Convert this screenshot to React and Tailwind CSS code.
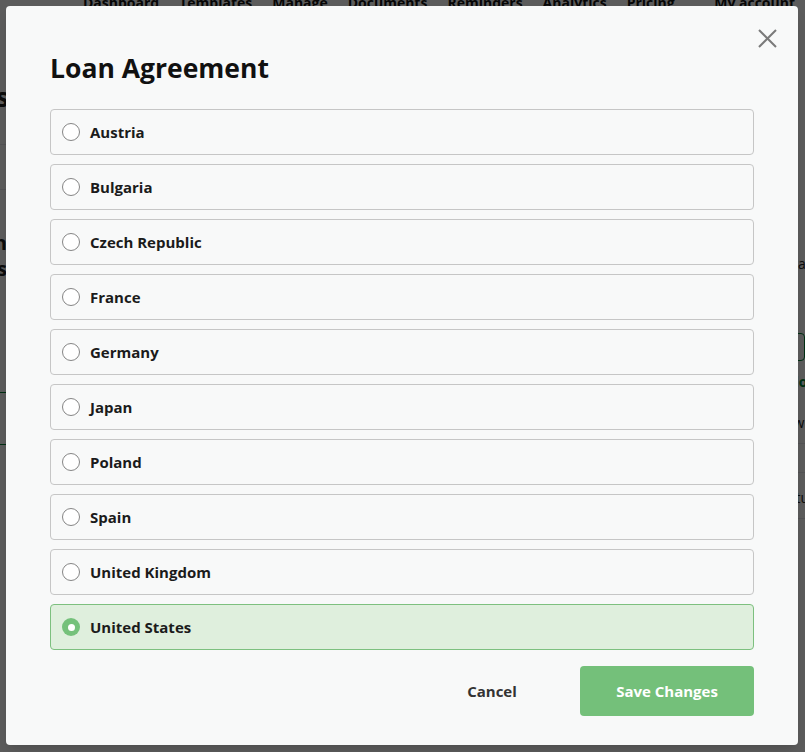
import React, { useState } from "react";

const countries = [
  "Austria",
  "Bulgaria",
  "Czech Republic",
  "France",
  "Germany",
  "Japan",
  "Poland",
  "Spain",
  "United Kingdom",
  "United States",
];

const navItems = [
  { label: "Dashboard", x: "ml-[83px]" },
  { label: "Templates", x: "ml-[20px]" },
  { label: "Manage", x: "ml-[20px]" },
  { label: "Documents", x: "ml-[20px]" },
  { label: "Reminders", x: "ml-[20px]" },
  { label: "Analytics", x: "ml-[20px]" },
  { label: "Pricing", x: "ml-[20px]" },
];

const LoanModal = () => {
  const [selected, setSelected] = useState("United States");

  return (
    <div className="w-[792px] h-[739px] bg-[#f8f9f9] rounded-[4px] relative px-[44px] pt-[46px] shadow-lg">
      {/* Close */}
      <button className="absolute top-[22px] right-[20px] w-[21px] h-[21px] flex items-center justify-center">
        <svg width="21" height="21" viewBox="0 0 21 21">
          <path d="M2 2 L19 19 M19 2 L2 19" stroke="#7a7a7a" strokeWidth="2" fill="none" />
        </svg>
      </button>

      <h2 className="text-[26.5px] leading-[32px] font-bold text-[#111] mb-[25px]">
        Loan Agreement
      </h2>

      <div className="flex flex-col gap-[9px]">
        {countries.map((c) => {
          const active = c === selected;
          return (
            <label
              key={c}
              onClick={() => setSelected(c)}
              className={`h-[46px] flex items-center gap-[10px] px-[11px] rounded-[4px] border cursor-pointer ${
                active ? "bg-[#dfefdd] border-[#7dc07f]" : "bg-[#f8f9f9] border-[#c6c6c6]"
              }`}
            >
              {active ? (
                <span className="w-[18px] h-[18px] rounded-full bg-[#75c17b] flex items-center justify-center">
                  <span className="w-[7px] h-[7px] rounded-full bg-white" />
                </span>
              ) : (
                <span className="w-[18px] h-[18px] rounded-full border border-[#858585] bg-white" />
              )}
              <span className="text-[15px] font-bold text-[#1b1b1b]">{c}</span>
            </label>
          );
        })}
      </div>

      <div className="flex justify-end items-center mt-[16px]">
        <button className="w-[100px] h-[50px] text-[15px] font-bold text-[#333] mr-[38px]">
          Cancel
        </button>
        <button className="w-[174px] h-[50px] rounded-[4px] bg-[#74c07a] text-white text-[15px] font-bold">
          Save Changes
        </button>
      </div>
    </div>
  );
};

export default function App() {
  return (
    <div className="relative w-full h-screen overflow-hidden bg-white font-['Open_Sans',sans-serif]">
      {/* Background page */}
      <div className="flex items-start -mt-[8px] h-[56px] text-[14px] font-bold text-[#111] whitespace-nowrap">
        {navItems.map((n) => (
          <span key={n.label} className={n.x}>
            {n.label}
          </span>
        ))}
        <span className="ml-auto mr-[10px]">My account</span>
      </div>
      <div className="flex">
        <div className="w-[300px] font-bold text-[#222] pt-[30px]">
          <div className="w-[9px] h-[66px] flex justify-end whitespace-nowrap text-[26px]">Documents</div>
          <div className="border-t border-gray-200 h-[45px]" />
          <div className="border-t border-gray-200 pt-[40px] text-[20px] leading-[26px]">
            <div className="w-[7px] flex justify-end whitespace-nowrap">Each</div>
            <div className="w-[7px] flex justify-end whitespace-nowrap">Items</div>
          </div>
          <div className="mt-[110px] border-t border-green-700 h-[52px]" />
          <div className="border-t border-green-700" />
        </div>
        <div className="flex-1" />
        <div className="w-[150px] pt-[205px] text-[14px] text-[#222]">
          <div className="ml-[120px] h-[80px]">Details</div>
          <div className="ml-[100px] h-[28px] border border-green-700 rounded" />
          <div className="ml-[120px] text-green-700 font-bold mt-[10px]">Upload</div>
          <div className="ml-[120px] mt-[20px]">New</div>
          <div className="border-t border-gray-200 mt-[10px] h-[29px]" />
          <div className="border-t border-gray-200 pt-[14px] ml-[120px]">Status</div>
          <div className="border-t border-gray-200 mt-[10px]" />
        </div>
      </div>

      {/* Overlay */}
      <div className="absolute inset-0 bg-black/[0.64]" />
      <div className="absolute inset-0 pt-[6px] pl-[6px]">
        <LoanModal />
      </div>
    </div>
  );
}
